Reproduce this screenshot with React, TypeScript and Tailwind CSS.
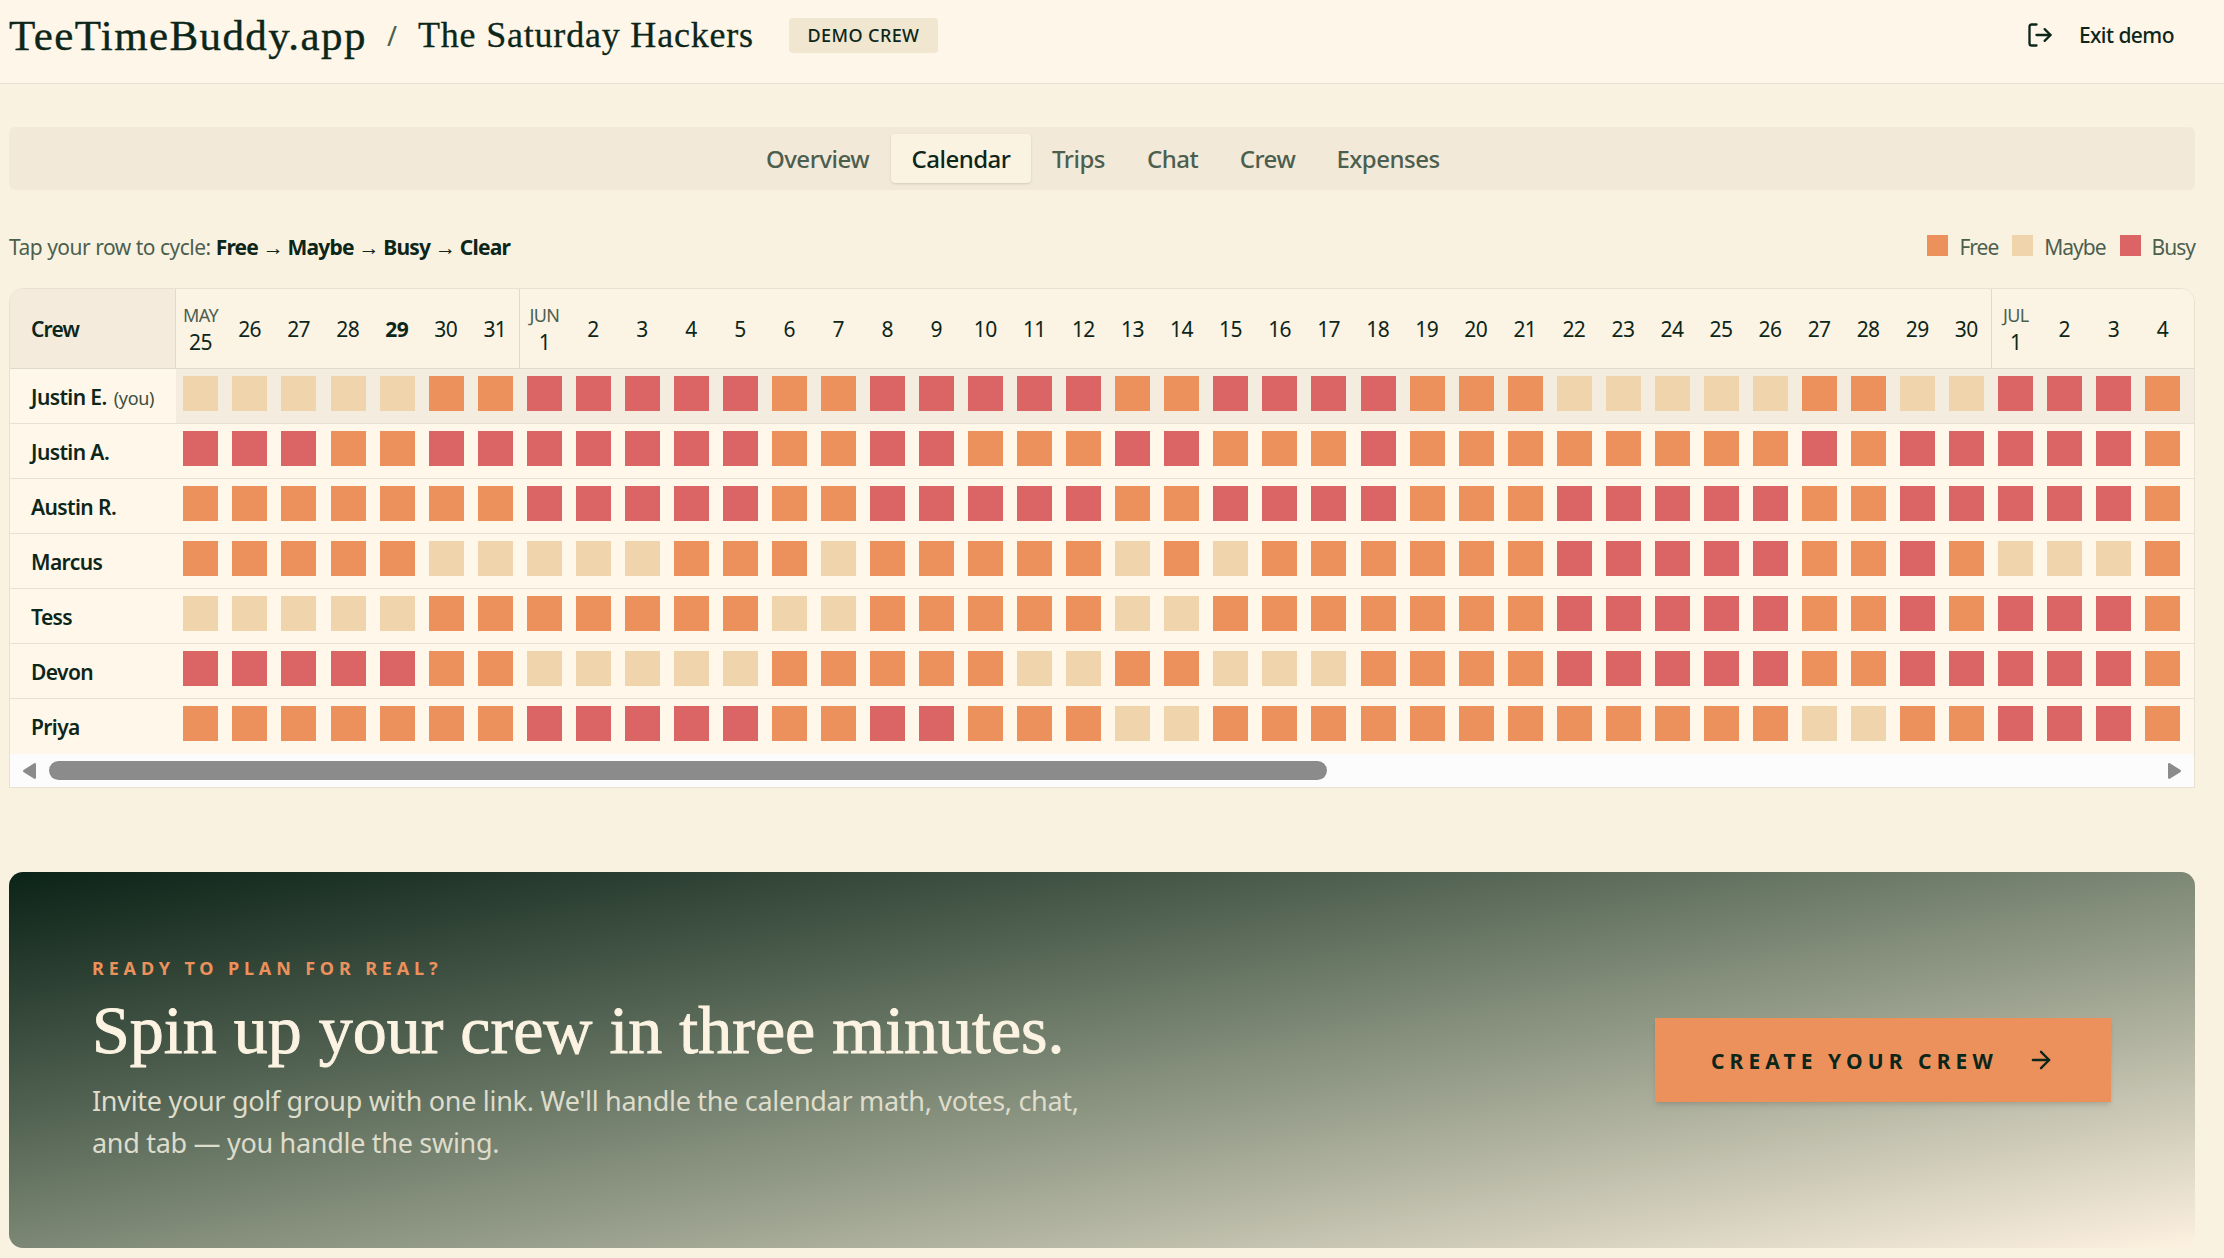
import React, { useState } from 'react';
import { ArrowRight, LogOut } from 'lucide-react';
import clsx from 'clsx';

type Status = 'F' | 'M' | 'B';

const TABS = [
  { name: 'Overview', width: 'w-[147px]' },
  { name: 'Calendar', width: 'w-[140px]' },
  { name: 'Trips', width: 'w-[95px]' },
  { name: 'Chat', width: 'w-[93px]' },
  { name: 'Crew', width: 'w-[97px]' },
  { name: 'Expenses', width: 'w-[144px]' },
];

const MONTHS = [
  { label: 'MAY', from: 25, to: 31 },
  { label: 'JUN', from: 1, to: 30 },
  { label: 'JUL', from: 1, to: 4 },
];

const TODAY = 'MAY-29';

// One letter per day, a space between weeks: F = free, M = maybe, B = busy
const CREW = [
  { name: 'Justin E.', you: true, days: 'MMMMMFF BBBBBFF BBBBBFF BBBBFFF MMMMMFF MMBBBF' },
  { name: 'Justin A.', days: 'BBBFFBB BBBBBFF BBFFFBB FFFBFFF FFFFFBF BBBBBF' },
  { name: 'Austin R.', days: 'FFFFFFF BBBBBFF BBBBBFF BBBBFFF BBBBBFF BBBBBF' },
  { name: 'Marcus', days: 'FFFFFMM MMMFFFM FFFFFMF MFFFFFF BBBBBFF BFMMMF' },
  { name: 'Tess', days: 'MMMMMFF FFFFFMM FFFFFMM FFFFFFF BBBBBFF BFBBBF' },
  { name: 'Devon', days: 'BBBBBFF MMMMMFF FFFMMFF MMMFFFF BBBBBFF BBBBBF' },
  { name: 'Priya', days: 'FFFFFFF BBBBBFF BBFFFMM FFFFFFF FFFFFMM FFBBBF' },
];

const STATUS_COLORS: Record<Status, string> = {
  F: 'bg-[#ec915c]',
  M: 'bg-[#f0d4ab]',
  B: 'bg-[#db6464]',
};

const NEXT_STATUS: Record<Status, Status> = { F: 'M', M: 'B', B: 'F' };

const days = MONTHS.flatMap((m) =>
  Array.from({ length: m.to - m.from + 1 }, (_, i) => ({
    key: `${m.label}-${m.from + i}`,
    day: m.from + i,
    month: i === 0 ? m.label : null,
  }))
);

const Header = () => (
  <header className="flex h-[84px] items-start justify-between border-b border-[#e6e1d0] bg-[#fef6e8] pl-[9px] pr-[50px]">
    <div className="flex h-[70px] items-center whitespace-nowrap">
      <span className="w-[357px] font-['Liberation_Serif',serif] text-[43px] leading-none tracking-[1.4px] [-webkit-text-stroke:0.4px_#0d261a]">
        TeeTimeBuddy.app
      </span>
      <span className="w-[52px] text-center text-[27px] leading-none text-[#4c5f4f]">/</span>
      <span className="w-[371px] font-['Liberation_Serif',serif] text-[36px] leading-none tracking-[0.8px] [-webkit-text-stroke:0.3px_#0d261a]">
        The Saturday Hackers
      </span>
      <span className="flex h-[35px] w-[149px] items-center justify-center rounded bg-[#f1e6d0] pb-px text-[18px] font-medium leading-none tracking-[0.4px]">
        DEMO CREW
      </span>
    </div>
    <button className="flex h-[70px] items-center gap-[25px] text-[21px] font-medium">
      <LogOut className="size-[28px]" />
      <span className="pt-[2px] tracking-[-0.55px]">Exit demo</span>
    </button>
  </header>
);

const Legend = () => (
  <div className="flex items-center gap-[14px] text-[#4c5f4f]">
    {[
      { status: 'F' as Status, label: 'Free' },
      { status: 'M' as Status, label: 'Maybe' },
      { status: 'B' as Status, label: 'Busy' },
    ].map(({ status, label }) => (
      <span key={label} className="flex items-center gap-[11px]">
        <span className={clsx('mb-[3px] size-[21px]', STATUS_COLORS[status])} />
        <span className="tracking-[-1px]">{label}</span>
      </span>
    ))}
  </div>
);

const Calendar = () => {
  const [rows, setRows] = useState(CREW.map((c) => c.days.replace(/ /g, '').split('') as Status[]));

  const cycle = (row: number, col: number) => {
    if (!CREW[row].you) return;
    setRows(rows.map((r, i) => (i === row ? r.map((s, j) => (j === col ? NEXT_STATUS[s] : s)) : r)));
  };

  return (
    <div className="h-[500px] overflow-hidden rounded-t-[14px] border border-[#e6e1d0] bg-[#fff7ea] text-[21px] leading-none">
      {/* Day headings */}
      <div className="flex h-[80px] border-b border-[#dfdbca] bg-[#fbf3e3]">
        <div className="flex w-[166px] shrink-0 items-center border-r border-[#dfdbca] bg-[#f4ebdc] pl-[21px] pt-[2px] font-semibold tracking-[-0.8px]">
          Crew
        </div>
        {days.map((d, i) => (
          <div
            key={d.key}
            className={clsx(
              'flex w-[49.05px] shrink-0 flex-col items-center justify-center pt-[2px] tracking-[-0.6px]',
              d.month && i > 0 && 'border-l border-[#dfdbca]',
              d.key === TODAY && 'font-bold'
            )}
          >
            {d.month && <span className="mb-[8px] text-[18px] text-[#4c5f4f]">{d.month}</span>}
            <span>{d.day}</span>
          </div>
        ))}
      </div>

      {/* Crew rows */}
      {CREW.map((c, row) => (
        <div
          key={c.name}
          className={clsx('flex h-[55px]', row < CREW.length - 1 && 'border-b border-[#e6e1d3]', c.you && 'bg-[#f3ecdf]')}
        >
          <div className="flex w-[166px] shrink-0 items-baseline whitespace-nowrap bg-[#fff7ea] pl-[21px] pt-[18px] font-semibold tracking-[-0.6px]">
            {c.name}
            {c.you && <span className="ml-[7px] text-[18px] font-normal tracking-[-0.3px] text-[#3b5040]">(you)</span>}
          </div>
          {rows[row].map((status, col) => (
            <div key={col} className="w-[49.05px] shrink-0 pl-[7.4px] pt-[7px]">
              <div className={clsx('size-[35px]', STATUS_COLORS[status])} onClick={() => cycle(row, col)} />
            </div>
          ))}
        </div>
      ))}

      {/* Scrollbar */}
      <div className="flex h-[33px] items-center bg-[#fcfcfc] pl-[13px] pr-[13px]">
        <svg viewBox="0 0 13 16" className="h-[16px] w-[13px] fill-[#8b8b8b]">
          <path d="M13 1.5v13c0 1.2-1.2 1.8-2.2 1.1L.8 9.2C-.2 8.500-.2 7.500.8 6.800L10.800.4C11.800-.3 13 .3 13 1.500z" />
        </svg>
        <div className="ml-[13px] h-[19px] w-[1278px] rounded-full bg-[#8b8b8b]" />
        <svg viewBox="0 0 13 16" className="ml-auto h-[16px] w-[13px] rotate-180 fill-[#8b8b8b]">
          <path d="M13 1.5v13c0 1.2-1.2 1.8-2.2 1.1L.8 9.2C-.2 8.500-.2 7.500.8 6.800L10.800.4C11.800-.3 13 .3 13 1.500z" />
        </svg>
      </div>
    </div>
  );
};

const CallToAction = () => (
  <section className="mt-[84px] flex h-[376px] items-center justify-between rounded-[14px] bg-linear-to-br from-[#0b2318] via-[#7c8875] to-[#fef1e0] pl-[83px] pr-[84px]">
    <div className="whitespace-nowrap">
      <p className="text-[18px] font-bold leading-[24px] tracking-[4.85px] text-[#ec915c]">READY TO PLAN FOR REAL?</p>
      <h2 className="mt-[12px] font-['Liberation_Serif',serif] text-[68px] leading-[76px] text-[#fcf3e2] [-webkit-text-stroke:0.9px_#fcf3e2]">
        Spin up your crew in three minutes.
      </h2>
      <p className="mt-[12px] text-[27px] leading-[42px] tracking-[-0.3px] text-[#dedccb]">
        Invite your golf group with one link. We'll handle the calendar math, votes, chat,
        <br />
        and tab — you handle the swing.
      </p>
    </div>
    <button className="flex h-[84px] w-[456px] items-center bg-[#ec915c] pl-[56px] text-[21px] font-bold shadow-md">
      <span className="whitespace-nowrap pt-[3px] tracking-[5.1px]">CREATE YOUR CREW</span>
      <ArrowRight className="ml-[29px] size-[28px]" />
    </button>
  </section>
);

const App = () => {
  const [activeTab, setActiveTab] = useState('Calendar');

  return (
    <div className="h-[1258px] w-full overflow-hidden bg-[#faf2e0] font-['Noto_Sans',sans-serif] text-[#0d261a]">
      <Header />

      <main className="ml-[9px] mr-[29px] mt-[43px]">
        <nav className="flex h-[63px] items-center justify-center rounded-md bg-[#f3e9d9]">
          {TABS.map((tab) => (
            <button
              key={tab.name}
              onClick={() => setActiveTab(tab.name)}
              className={clsx(
                'h-[49px] rounded-[4px] text-[24px] font-medium leading-none tracking-[-0.5px]',
                tab.width,
                activeTab === tab.name ? 'bg-[#fbf3e2] shadow' : 'text-[#4c5f4f]'
              )}
            >
              {tab.name}
            </button>
          ))}
        </nav>

        <div className="mt-[42px] flex h-[30px] items-center justify-between text-[21px] leading-[30px]">
          <p className="tracking-[-0.5px] text-[#4c5f4f]">
            Tap your row to cycle:{' '}
            <span className="tracking-[-0.8px] text-[#0d261a]">
              <b>Free</b> → <b>Maybe</b> → <b>Busy</b> → <b>Clear</b>
            </span>
          </p>
          <Legend />
        </div>

        <div className="mt-[26px]">
          <Calendar />
        </div>

        <CallToAction />
      </main>
    </div>
  );
};

export default App;
